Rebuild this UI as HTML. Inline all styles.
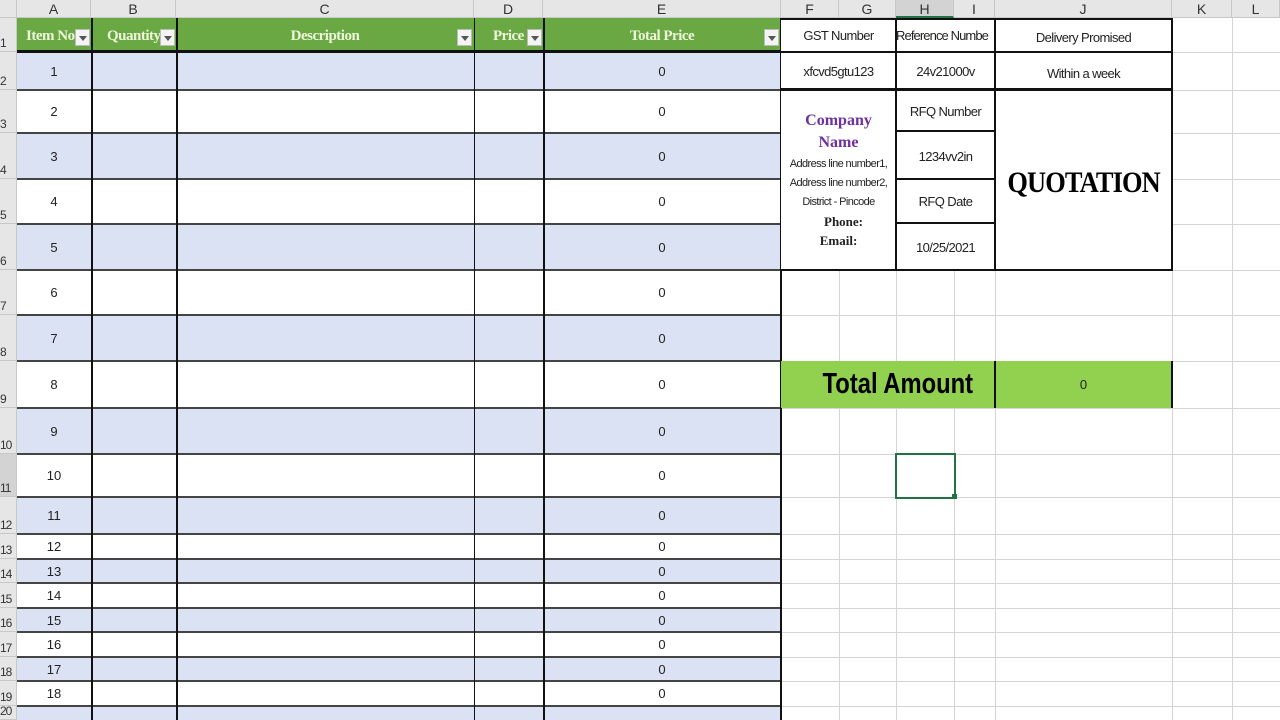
<!DOCTYPE html>
<html><head><meta charset="utf-8"><style>
*{margin:0;padding:0;box-sizing:border-box}
body{width:1280px;height:720px;overflow:hidden;background:#fff;position:relative;font-family:"Liberation Sans",sans-serif;color:#222}
.a{position:absolute}
.ch{top:0;height:18px;background:#e6e6e6;border-right:1px solid #c8c8c8;border-bottom:1px solid #c8c8c8;text-align:center;font-size:14px;line-height:18px;color:#333}
.rh{left:0;width:17px;background:#e6e6e6;border-bottom:1px solid #c8c8c8;border-right:1px solid #c8c8c8;font-size:12px;color:#333;display:flex;align-items:flex-end;padding-bottom:1px;letter-spacing:-1px}
.gv{width:1px;background:#d4d4d4;top:18px;height:702px}
.gh{height:1px;background:#d4d4d4;left:781px;width:499px}
.hd{font-family:"Liberation Serif",serif;font-weight:bold;color:#eef6dc;font-size:15px;text-align:center;line-height:36px;top:18px;height:34px;white-space:nowrap;overflow:hidden;letter-spacing:-0.5px}
.dd{width:15px;height:17px;background:#f4f4f4;border:1px solid #bbb;top:29px}
.dd:after{content:"";position:absolute;left:3px;top:6px;border-left:4px solid transparent;border-right:4px solid transparent;border-top:5px solid #555}
.c{text-align:center;font-size:13px;display:flex;align-items:center;justify-content:center;white-space:nowrap}
.n{font-size:13px;letter-spacing:-0.6px}
</style></head><body>
<div class="a ch" style="left:0;width:17px"></div>
<div class="a ch" style="left:17px;width:74px">A</div>
<div class="a ch" style="left:91px;width:85px">B</div>
<div class="a ch" style="left:176px;width:298px">C</div>
<div class="a ch" style="left:474px;width:69px">D</div>
<div class="a ch" style="left:543px;width:238px">E</div>
<div class="a ch" style="left:781px;width:58px">F</div>
<div class="a ch" style="left:839px;width:57px">G</div>
<div class="a ch" style="left:896px;width:58px;background:#d3d3d3;border-bottom:2px solid #217346">H</div>
<div class="a ch" style="left:954px;width:41px">I</div>
<div class="a ch" style="left:995px;width:177px">J</div>
<div class="a ch" style="left:1172px;width:60px">K</div>
<div class="a ch" style="left:1232px;width:48px">L</div>

<div class="a rh" style="top:18px;height:34px">1</div>
<div class="a rh" style="top:52px;height:38px">2</div>
<div class="a rh" style="top:90px;height:43px">3</div>
<div class="a rh" style="top:133px;height:46px">4</div>
<div class="a rh" style="top:179px;height:45px">5</div>
<div class="a rh" style="top:224px;height:46px">6</div>
<div class="a rh" style="top:270px;height:45px">7</div>
<div class="a rh" style="top:315px;height:46px">8</div>
<div class="a rh" style="top:361px;height:47px">9</div>
<div class="a rh" style="top:408px;height:46px">10</div>
<div class="a rh" style="top:454px;height:43px;background:#d3d3d3">11</div>
<div class="a rh" style="top:497px;height:37px">12</div>
<div class="a rh" style="top:534px;height:25px">13</div>
<div class="a rh" style="top:559px;height:24px">14</div>
<div class="a rh" style="top:583px;height:25px">15</div>
<div class="a rh" style="top:608px;height:24px">16</div>
<div class="a rh" style="top:632px;height:25px">17</div>
<div class="a rh" style="top:657px;height:24px">18</div>
<div class="a rh" style="top:681px;height:25px">19</div>
<div class="a rh" style="top:706px;height:14px">20</div>

<div class="a gv" style="left:839px"></div>
<div class="a gv" style="left:896px"></div>
<div class="a gv" style="left:954px"></div>
<div class="a gv" style="left:995px"></div>
<div class="a gv" style="left:1172px"></div>
<div class="a gv" style="left:1232px"></div>
<div class="a gh" style="top:52px"></div><div class="a gh" style="top:90px"></div><div class="a gh" style="top:133px"></div><div class="a gh" style="top:179px"></div><div class="a gh" style="top:224px"></div><div class="a gh" style="top:270px"></div><div class="a gh" style="top:315px"></div><div class="a gh" style="top:361px"></div><div class="a gh" style="top:408px"></div><div class="a gh" style="top:454px"></div><div class="a gh" style="top:497px"></div><div class="a gh" style="top:534px"></div><div class="a gh" style="top:559px"></div><div class="a gh" style="top:583px"></div><div class="a gh" style="top:608px"></div><div class="a gh" style="top:632px"></div><div class="a gh" style="top:657px"></div><div class="a gh" style="top:681px"></div><div class="a gh" style="top:706px"></div>

<div class="a" style="left:17px;top:18px;width:764px;height:34px;background:#6aa843"></div>
<div class="a hd" style="left:17px;width:58px;text-align:left;padding-left:9px">Item No</div>
<div class="a dd" style="left:75px"></div>
<div class="a hd" style="left:93px;width:67px;text-align:left;padding-left:14px">Quantity</div>
<div class="a dd" style="left:160px"></div>
<div class="a hd" style="left:176px;width:298px">Description</div>
<div class="a dd" style="left:457px"></div>
<div class="a hd" style="left:475px;width:52px;text-align:left;padding-left:18px">Price</div>
<div class="a dd" style="left:527px"></div>
<div class="a hd" style="left:543px;width:238px">Total Price</div>
<div class="a dd" style="left:764px"></div>

<div class="a" style="left:17px;top:52px;width:764px;height:38px;background:#dae2f3"></div>
<div class="a" style="left:17px;top:133px;width:764px;height:46px;background:#dae2f3"></div>
<div class="a" style="left:17px;top:224px;width:764px;height:46px;background:#dae2f3"></div>
<div class="a" style="left:17px;top:315px;width:764px;height:46px;background:#dae2f3"></div>
<div class="a" style="left:17px;top:408px;width:764px;height:46px;background:#dae2f3"></div>
<div class="a" style="left:17px;top:497px;width:764px;height:37px;background:#dae2f3"></div>
<div class="a" style="left:17px;top:559px;width:764px;height:24px;background:#dae2f3"></div>
<div class="a" style="left:17px;top:608px;width:764px;height:24px;background:#dae2f3"></div>
<div class="a" style="left:17px;top:657px;width:764px;height:24px;background:#dae2f3"></div>
<div class="a" style="left:17px;top:706px;width:764px;height:14px;background:#dae2f3"></div>
<div class="a" style="left:17px;top:50px;width:764px;height:3px;background:#111"></div>
<div class="a" style="left:17px;top:89px;width:764px;height:2px;background:#444"></div>
<div class="a" style="left:17px;top:132px;width:764px;height:2px;background:#444"></div>
<div class="a" style="left:17px;top:178px;width:764px;height:2px;background:#444"></div>
<div class="a" style="left:17px;top:223px;width:764px;height:2px;background:#444"></div>
<div class="a" style="left:17px;top:269px;width:764px;height:2px;background:#444"></div>
<div class="a" style="left:17px;top:314px;width:764px;height:2px;background:#444"></div>
<div class="a" style="left:17px;top:360px;width:764px;height:2px;background:#444"></div>
<div class="a" style="left:17px;top:407px;width:764px;height:2px;background:#444"></div>
<div class="a" style="left:17px;top:453px;width:764px;height:2px;background:#444"></div>
<div class="a" style="left:17px;top:496px;width:764px;height:2px;background:#444"></div>
<div class="a" style="left:17px;top:533px;width:764px;height:2px;background:#444"></div>
<div class="a" style="left:17px;top:558px;width:764px;height:2px;background:#444"></div>
<div class="a" style="left:17px;top:582px;width:764px;height:2px;background:#444"></div>
<div class="a" style="left:17px;top:607px;width:764px;height:2px;background:#444"></div>
<div class="a" style="left:17px;top:631px;width:764px;height:2px;background:#444"></div>
<div class="a" style="left:17px;top:656px;width:764px;height:2px;background:#444"></div>
<div class="a" style="left:17px;top:680px;width:764px;height:2px;background:#444"></div>
<div class="a" style="left:17px;top:705px;width:764px;height:2px;background:#444"></div>
<div class="a" style="left:91px;top:18px;width:2px;height:702px;background:#111"></div>
<div class="a" style="left:176px;top:18px;width:2px;height:702px;background:#111"></div>
<div class="a" style="left:474px;top:18px;width:1px;height:702px;background:#111"></div>
<div class="a" style="left:543px;top:18px;width:2px;height:702px;background:#111"></div>
<div class="a" style="left:780px;top:18px;width:2px;height:702px;background:#111"></div>

<div class="a c" style="left:17px;top:52px;width:74px;height:38px">1</div><div class="a c" style="left:543px;top:52px;width:238px;height:38px">0</div>
<div class="a c" style="left:17px;top:90px;width:74px;height:43px">2</div><div class="a c" style="left:543px;top:90px;width:238px;height:43px">0</div>
<div class="a c" style="left:17px;top:133px;width:74px;height:46px">3</div><div class="a c" style="left:543px;top:133px;width:238px;height:46px">0</div>
<div class="a c" style="left:17px;top:179px;width:74px;height:45px">4</div><div class="a c" style="left:543px;top:179px;width:238px;height:45px">0</div>
<div class="a c" style="left:17px;top:224px;width:74px;height:46px">5</div><div class="a c" style="left:543px;top:224px;width:238px;height:46px">0</div>
<div class="a c" style="left:17px;top:270px;width:74px;height:45px">6</div><div class="a c" style="left:543px;top:270px;width:238px;height:45px">0</div>
<div class="a c" style="left:17px;top:315px;width:74px;height:46px">7</div><div class="a c" style="left:543px;top:315px;width:238px;height:46px">0</div>
<div class="a c" style="left:17px;top:361px;width:74px;height:47px">8</div><div class="a c" style="left:543px;top:361px;width:238px;height:47px">0</div>
<div class="a c" style="left:17px;top:408px;width:74px;height:46px">9</div><div class="a c" style="left:543px;top:408px;width:238px;height:46px">0</div>
<div class="a c" style="left:17px;top:454px;width:74px;height:43px">10</div><div class="a c" style="left:543px;top:454px;width:238px;height:43px">0</div>
<div class="a c" style="left:17px;top:497px;width:74px;height:37px">11</div><div class="a c" style="left:543px;top:497px;width:238px;height:37px">0</div>
<div class="a c" style="left:17px;top:534px;width:74px;height:25px">12</div><div class="a c" style="left:543px;top:534px;width:238px;height:25px">0</div>
<div class="a c" style="left:17px;top:559px;width:74px;height:24px">13</div><div class="a c" style="left:543px;top:559px;width:238px;height:24px">0</div>
<div class="a c" style="left:17px;top:583px;width:74px;height:25px">14</div><div class="a c" style="left:543px;top:583px;width:238px;height:25px">0</div>
<div class="a c" style="left:17px;top:608px;width:74px;height:24px">15</div><div class="a c" style="left:543px;top:608px;width:238px;height:24px">0</div>
<div class="a c" style="left:17px;top:632px;width:74px;height:25px">16</div><div class="a c" style="left:543px;top:632px;width:238px;height:25px">0</div>
<div class="a c" style="left:17px;top:657px;width:74px;height:24px">17</div><div class="a c" style="left:543px;top:657px;width:238px;height:24px">0</div>
<div class="a c" style="left:17px;top:681px;width:74px;height:25px">18</div><div class="a c" style="left:543px;top:681px;width:238px;height:25px">0</div>

<div class="a" style="left:781px;top:18px;width:392px;height:253px;background:#fff;border:2px solid #111;border-left:none"></div>
<div class="a" style="left:781px;top:51px;width:392px;height:2px;background:#111"></div>
<div class="a" style="left:781px;top:88px;width:392px;height:3px;background:#111"></div>
<div class="a" style="left:895px;top:18px;width:2px;height:252px;background:#111"></div>
<div class="a" style="left:994px;top:18px;width:2px;height:252px;background:#111"></div>
<div class="a" style="left:896px;top:130px;width:99px;height:2px;background:#111"></div>
<div class="a" style="left:896px;top:178px;width:99px;height:2px;background:#111"></div>
<div class="a" style="left:896px;top:222px;width:99px;height:2px;background:#111"></div>

<div class="a c n" style="left:781px;top:18px;width:115px;height:34px">GST Number</div>
<div class="a c n" style="left:896px;top:18px;width:99px;height:34px;overflow:hidden;justify-content:flex-start;letter-spacing:-0.9px">Reference Numbe</div>
<div class="a c n" style="left:995px;top:20px;width:177px;height:34px">Delivery Promised</div>
<div class="a c n" style="left:781px;top:52px;width:115px;height:38px">xfcvd5gtu123</div>
<div class="a c n" style="left:896px;top:52px;width:99px;height:38px">24v21000v</div>
<div class="a c n" style="left:995px;top:54px;width:177px;height:38px">Within a week</div>
<div class="a c n" style="left:896px;top:90px;width:99px;height:42px">RFQ Number</div>
<div class="a c n" style="left:896px;top:133px;width:99px;height:46px">1234vv2in</div>
<div class="a c n" style="left:896px;top:179px;width:99px;height:45px">RFQ Date</div>
<div class="a c n" style="left:896px;top:224px;width:99px;height:46px">10/25/2021</div>
<div class="a" style="left:781px;top:110px;width:115px;text-align:center;line-height:22px;font-family:'Liberation Serif',serif;font-weight:bold;font-size:16px;color:#7030a0">Company<br>Name</div>
<div class="a" style="left:781px;top:155px;width:115px;text-align:center;line-height:19px;font-size:11px;letter-spacing:-0.6px;white-space:nowrap">Address line number1,<br>Address line number2,<br>District - Pincode</div>
<div class="a" style="left:781px;top:212px;width:125px;text-align:center;line-height:19px;font-family:'Liberation Serif',serif;font-weight:bold;font-size:13px">Phone:</div>
<div class="a" style="left:781px;top:231px;width:115px;text-align:center;line-height:19px;font-family:'Liberation Serif',serif;font-weight:bold;font-size:13px">Email:</div>
<div class="a c" style="left:995px;top:160px;width:177px;height:46px;font-family:'Liberation Serif',serif;font-weight:bold;font-size:30px;color:#000;letter-spacing:-1px"><span style="display:inline-block;transform:scaleX(0.88)">QUOTATION</span></div>

<div class="a" style="left:781px;top:361px;width:390px;height:47px;background:#92d050"></div>
<div class="a" style="left:994px;top:361px;width:2px;height:47px;background:#111"></div>
<div class="a" style="left:1171px;top:361px;width:2px;height:47px;background:#111"></div>
<div class="a c" style="left:781px;top:361px;width:214px;height:47px;font-weight:bold;font-size:29px;color:#000;padding-left:20px"><span style="display:inline-block;transform:scaleX(0.82)">Total Amount</span></div>
<div class="a c" style="left:995px;top:361px;width:177px;height:47px;font-size:13px">0</div>

<div class="a" style="left:895px;top:453px;width:61px;height:46px;border:2px solid #217346"></div>
<div class="a" style="left:952px;top:494px;width:5px;height:5px;background:#217346"></div>
</body></html>
